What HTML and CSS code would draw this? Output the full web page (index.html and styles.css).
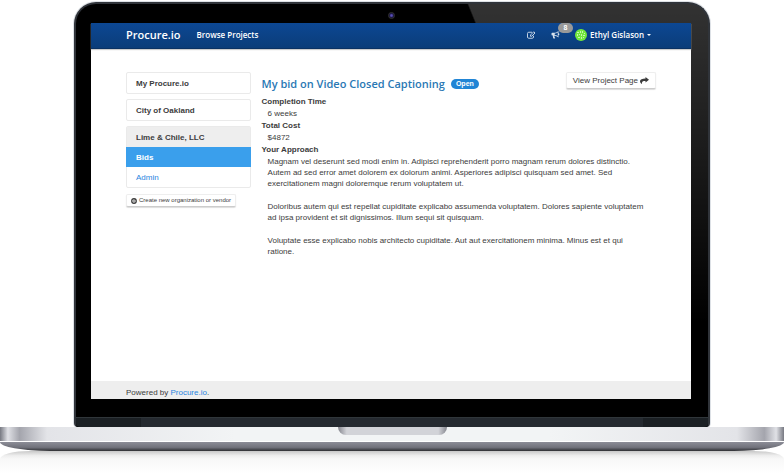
FILE: index.html
```html
<!DOCTYPE html>
<html lang="en">
<head>
<meta charset="utf-8">
<title>My bid on Video Closed Captioning - Procure.io</title>
<link rel="stylesheet" href="styles.css">
</head>
<body>
<div class="laptop">
  <div class="lid">
    <div class="camera"></div>
    <div class="screen">
      <header class="navbar">
        <a class="brand" href="#">Procure.io</a>
        <a class="nav-link" href="#">Browse Projects</a>
        <nav class="account">
          <a class="nav-icon" href="#" aria-label="Edit">
            <svg viewBox="0 0 18 16" width="9" height="8" fill="none" stroke="currentColor" stroke-width="1.8"><path d="M13 9.500v2.500a2.500 2.500 0 0 1-2.500 2.500h-7A2.500 2.500 0 0 1 1 12V5a2.500 2.500 0 0 1 2.500-2.500H10"/><path d="M7 10.500V8l6.500-6.500L16 4l-6.500 6.500z"/></svg>
          </a>
          <a class="nav-icon" href="#" aria-label="Notifications">
            <svg viewBox="0 0 18 16" width="9" height="8" fill="currentColor"><path fill-rule="evenodd" d="M15 0v4.500a1.500 1.500 0 0 1 0 3.500v5c-3-2.500-5.500-3.500-8-3.700-.8.700-.5 1.500.2 2.200-.4.900.2 1.500 1.300 2.300-.8 1.500-3.300 1.300-4 .5C4 12.500 3.300 11 3.900 9.200H2.500A1.500 1.500 0 0 1 1 7.700V5.200a1.500 1.500 0 0 1 1.500-1.500H6C9 3.700 12 2.500 15 0zm-1.400 2.800C11.500 4.200 9.500 4.900 7.500 5.100v2.800c2 .2 4 1 6.100 2.300z"/></svg>
            <span class="count">8</span>
          </a>
          <a class="user" href="#">
            <svg viewBox="0 0 12 12" width="12" height="12"><circle cx="6" cy="6" r="6" fill="#72e83c"/><path d="M2 3h2v1H2zM5 2h1v2H5zM7 2h1v2H7zM9 4h1v1H9zM2 5h1v2H2zM4 5h1v1H4zM6 5h1v2H6zM8 6h2v1H8zM3 8h2v1H3zM6 8h1v2H6zM8 8h1v1H8z" fill="#c5f7ad"/></svg>
            Ethyl Gislason
            <span class="caret"></span>
          </a>
        </nav>
      </header>
      <div class="content">
        <aside>
          <a class="panel" href="#">My Procure.io</a>
          <a class="panel" href="#">City of Oakland</a>
          <div class="group">
            <a class="group-title" href="#">Lime &amp; Chile, LLC</a>
            <a class="group-item active" href="#">Bids</a>
            <a class="group-item" href="#">Admin</a>
          </div>
          <button class="button small" type="button">
            <svg viewBox="0 0 12 12" width="6" height="6" fill="none" stroke="currentColor"><circle cx="6" cy="6" r="4.500" stroke-width="2.600"/><path d="M6 4v4M4 6h4" stroke-width="1"/></svg>
            Create new organization or vendor
          </button>
        </aside>
        <main>
          <div class="bid-head">
            <h1>My bid on Video Closed Captioning</h1>
            <span class="status">Open</span>
            <button class="button" type="button">
              View Project Page
              <svg viewBox="0 0 18 14" width="9" height="7" fill="currentColor"><path d="M11 0l7 5.500L11 11V8C5.500 8 3.500 9 3.800 14 1.500 12.500 0 10.800 0 8.500 0 4.500 4.500 3 11 3z"/></svg>
            </button>
          </div>
          <dl>
            <dt>Completion Time</dt>
            <dd>6 weeks</dd>
            <dt>Total Cost</dt>
            <dd>$4872</dd>
            <dt>Your Approach</dt>
            <dd>
              <p>Magnam vel deserunt sed modi enim in. Adipisci reprehenderit porro magnam rerum dolores distinctio. Autem ad sed error amet dolorem ex dolorum animi. Asperiores adipisci quisquam sed amet. Sed exercitationem magni doloremque rerum voluptatem ut.</p>
              <p>Doloribus autem qui est repellat cupiditate explicabo assumenda voluptatem. Dolores sapiente voluptatem ad ipsa provident et sit dignissimos. Illum sequi sit quisquam.</p>
              <p>Voluptate esse explicabo nobis architecto cupiditate. Aut aut exercitationem minima. Minus est et qui ratione.</p>
            </dd>
          </dl>
        </main>
      </div>
      <footer class="footer">Powered by <a href="#">Procure.io</a>.</footer>
    </div>
    <div class="hinge"></div>
  </div>
  <div class="base"><div class="notch"></div></div>
  <div class="underside"></div>
  <div class="reflection"></div>
</div>
</body>
</html>
```
FILE: styles.css
```css
* { box-sizing: border-box; }

body {
  margin: 0;
  background: #fff;
  color: #3c3c3c;
  font: 8px/11px "Liberation Sans", Arial, sans-serif;
}

a { color: #2a85e0; text-decoration: none; }

.laptop {
  display: flex;
  flex-direction: column;
  min-height: 100vh;
  padding-top: 2px;
  overflow: hidden;
}

/* Lid */
.lid {
  flex: 1;
  display: flex;
  flex-direction: column;
  margin: 0 74px;
  padding: 0 16px 0 15px;
  border: 2px solid #30343a;
  border-bottom: 0;
  border-radius: 22px 22px 4px 4px;
  background:
    linear-gradient(transparent, #000 75%),
    linear-gradient(68deg, #000 70%, #323232 70.2%);
  box-shadow: 0 0 0 1px #dde1e6;
}

.camera {
  align-self: center;
  width: 7px;
  height: 7px;
  margin: 8px 0 4px;
  border: 1px solid #333;
  border-radius: 50%;
  background: radial-gradient(circle, #5a4fb8 0 20%, #17133c 60%);
}

.screen {
  flex: 1;
  display: flex;
  flex-direction: column;
  margin-right: 1px;
  background: #fff;
}

.hinge {
  height: 10px;
  margin: 18px -16px 0 -15px;
  border-top: 1px solid #30363a;
  border-radius: 0 0 4px 4px;
  background: linear-gradient(90deg, #1b2024 0 65px, #252a30 65px calc(100% - 65px), #1b2024 calc(100% - 65px));
}

/* Navigation */
.navbar {
  display: flex;
  align-items: center;
  height: 26px;
  padding: 0 40px 2px 35px;
  border-bottom: 1px solid #0a3263;
  background: linear-gradient(#0c4793, #0b3d79);
  box-shadow: 0 1px 1px #ccc;
  font-family: "Open Sans", sans-serif;
  font-weight: 600;
}

.navbar a { color: #fff; }
.brand { font-size: 11px; }
.nav-link { margin-left: 16px; }

.account {
  display: flex;
  align-items: center;
  gap: 15px;
  margin-left: auto;
}

.nav-icon { display: flex; position: relative; }
.navbar .nav-icon { color: #d5e0ec; }

.count {
  position: absolute;
  left: 7px;
  top: -8px;
  width: 15px;
  border-radius: 5px;
  background: #999;
  color: #fff;
  font: bold 7px/10px "Liberation Sans", Arial, sans-serif;
  text-align: center;
}

.user { display: flex; align-items: center; gap: 3px; }

.caret {
  border: 2px solid transparent;
  border-top-color: #fff;
  border-bottom: 0;
}

/* Page */
.content {
  display: grid;
  grid-template-columns: 24fr 76fr;
  gap: 11px;
  flex: 1;
  padding: 23px 35px 22px;
}

.panel, .group { border: 1px solid #eaeaea; border-radius: 2px; }

.panel, .group-title {
  display: block;
  color: #3c3c3c;
  font-weight: bold;
}

.panel { margin-bottom: 5px; padding: 5px 9px 4px; }
.group { margin-bottom: 6px; }
.group-title { padding: 5px 9px 4px; background: #eee; }
.group-item { display: block; padding: 5px 9px 4px; }
.group-item.active { margin: 0 -1px; padding: 5px 10px 4px; background: #3a9fec; color: #fff; font-weight: bold; }

.button {
  display: inline-flex;
  align-items: center;
  gap: 2px;
  padding: 2px 6px;
  border: 1px solid #eee;
  border-bottom-color: #ccc;
  border-radius: 2px;
  background: #fff;
  box-shadow: 0 1px 1px #ddd;
  color: #3c3c3c;
  font: inherit;
}

.button.small { padding: 0 4px; font-size: 6px; }

.bid-head { display: flex; align-items: center; }

h1 {
  margin: 0;
  color: #2a78b4;
  font: 600 11px/24px "Open Sans", sans-serif;
}

.status {
  margin-left: 6px;
  padding: 0 5px;
  border-radius: 5px;
  background: #2185d5;
  color: #fff;
  font-size: 7px;
  font-weight: bold;
  line-height: 10px;
}

.bid-head .button { margin-left: auto; align-self: flex-start; }

dl { margin: 0; }
dt { font-weight: bold; line-height: 12px; }
dd { margin: 0 0 0 6px; line-height: 12px; }
dd p { margin: 0 8px 12px 0; line-height: 11px; }

.footer {
  padding: 6px 35px 1px;
  background: #eee;
}

/* Base */
.base {
  height: 15px;
  border-bottom: 1px solid #fff;
  background: linear-gradient(90deg, #777982, #e0e1e6 1%, #a4a5ad 2.500%, #e3e4e8 6%, #f2f4f5 30% 70%, #e3e4e8 94%, #a4a5ad 97.500%, #e0e1e6 99%, #777982);
}

.notch {
  width: 109px;
  height: 8px;
  margin: 0 auto;
  border-radius: 0 0 8px 8px;
  background: linear-gradient(90deg, #85868e, #d2d3d8 8% 92%, #85868e);
}

.underside {
  height: 9px;
  border-radius: 0 0 50px 50px / 0 0 9px 9px;
  background: linear-gradient(#8c8d97, #71727b 60%, #2e2f33);
}

.reflection {
  height: 23px;
  border-radius: 30px 30px 0 0 / 8px 8px 0 0;
  background: linear-gradient(#c8c8c8, #eee 20%, #f8f8f8 35%, #fff);
}
```
